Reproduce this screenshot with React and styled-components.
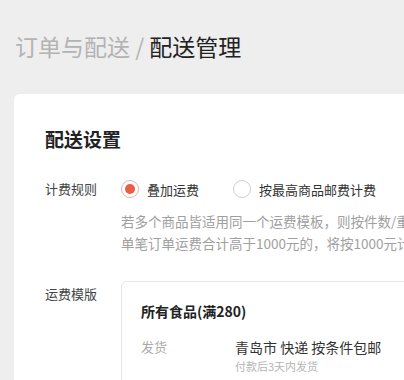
import styled, { createGlobalStyle } from "styled-components";

const GlobalStyle = createGlobalStyle`
  html, body {
    margin: 0;
    padding: 0;
    background: #eeeeee;
    overflow: hidden;
  }
  body {
    font-family: "Noto Sans CJK SC", "Noto Sans", sans-serif;
    color: #333;
  }
`;

const Page = styled.div`
  width: 404px;
  height: 380px;
  padding: 0 0 0 14px;
  box-sizing: border-box;
  overflow: hidden;
`;

const Crumbs = styled.h1`
  margin: 0;
  height: 94px;
  padding: 0 0 2px 1px;
  display: flex;
  align-items: center;
  font-size: 23px;
  font-weight: 400;
  line-height: 1;
  box-sizing: border-box;
  white-space: nowrap;
`;

const Crumb = styled.span`
  color: ${(p) => (p.$current ? "#222" : "#b3b3b3")};
`;

const Card = styled.section`
  background: #fff;
  border-radius: 6px 0 0 0;
  width: 460px;
  min-height: 300px;
  padding: 29px 0 0 31px;
  box-sizing: border-box;
`;

const Heading = styled.h2`
  margin: 0 0 22px;
  font-size: 19px;
  font-weight: 700;
  line-height: 32px;
  color: #222;
`;

const Row = styled.div`
  display: grid;
  grid-template-columns: 76px 1fr;
  align-items: start;
  margin-bottom: ${(p) => p.$gap || 0}px;
`;

const Label = styled.div`
  font-size: 13px;
  line-height: 24px;
  color: #444;
  white-space: nowrap;
`;

const Options = styled.div`
  display: flex;
  align-items: center;
  gap: 34px;
  height: 24px;
`;

const Option = styled.label`
  display: flex;
  align-items: center;
  gap: 8px;
  font-size: 13px;
  color: #333;
  white-space: nowrap;
`;

const Radio = styled.span`
  width: 18px;
  height: 18px;
  border-radius: 50%;
  box-sizing: border-box;
  border: 1px solid ${(p) => (p.$checked ? "#e6b4ab" : "#cfcfcf")};
  display: flex;
  align-items: center;
  justify-content: center;
  &::after {
    content: "";
    width: 10px;
    height: 10px;
    border-radius: 50%;
    background: ${(p) => (p.$checked ? "#ec5d45" : "transparent")};
  }
`;

const Help = styled.p`
  margin: 9px 0 0;
  font-size: 13.5px;
  line-height: 22px;
  color: #a0a0a0;
  white-space: nowrap;
`;

const Template = styled.div`
  border: 1px solid #e6e6e6;
  border-radius: 6px 0 0 0;
  padding: 17px 0 0 19px;
  min-height: 120px;
  margin-top: -1px;
`;

const TemplateName = styled.div`
  font-size: 14px;
  font-weight: 700;
  color: #222;
  line-height: 24px;
  margin-bottom: 12px;
`;

const Detail = styled.div`
  display: grid;
  grid-template-columns: 94px 1fr;
`;

const DetailKey = styled.div`
  font-size: 13px;
  color: #aaa;
  line-height: 24px;
`;

const DetailMain = styled.div`
  font-size: 14px;
  color: #333;
  line-height: 24px;
  white-space: nowrap;
`;

const DetailSub = styled.div`
  font-size: 11px;
  color: #b5b5b5;
  line-height: 14px;
`;

export default function App() {
  return (
    <Page>
      <GlobalStyle />
      <Crumbs>
        <Crumb>订单与配送 /&nbsp;</Crumb>
        <Crumb $current>配送管理</Crumb>
      </Crumbs>
      <Card>
        <Heading>配送设置</Heading>
        <Row $gap={28}>
          <Label>计费规则</Label>
          <div>
            <Options>
              <Option>
                <Radio $checked />
                叠加运费
              </Option>
              <Option>
                <Radio />
                按最高商品邮费计费
              </Option>
            </Options>
            <Help>
              若多个商品皆适用同一个运费模板，则按件数/重量累计计算运费；
              <br />
              单笔订单运费合计高于1000元的，将按1000元计算。
            </Help>
          </div>
        </Row>
        <Row>
          <Label>运费模版</Label>
          <Template>
            <TemplateName>所有食品(满280)</TemplateName>
            <Detail>
              <DetailKey>发货</DetailKey>
              <div>
                <DetailMain>青岛市 快递 按条件包邮</DetailMain>
                <DetailSub>付款后3天内发货</DetailSub>
              </div>
            </Detail>
          </Template>
        </Row>
      </Card>
    </Page>
  );
}
